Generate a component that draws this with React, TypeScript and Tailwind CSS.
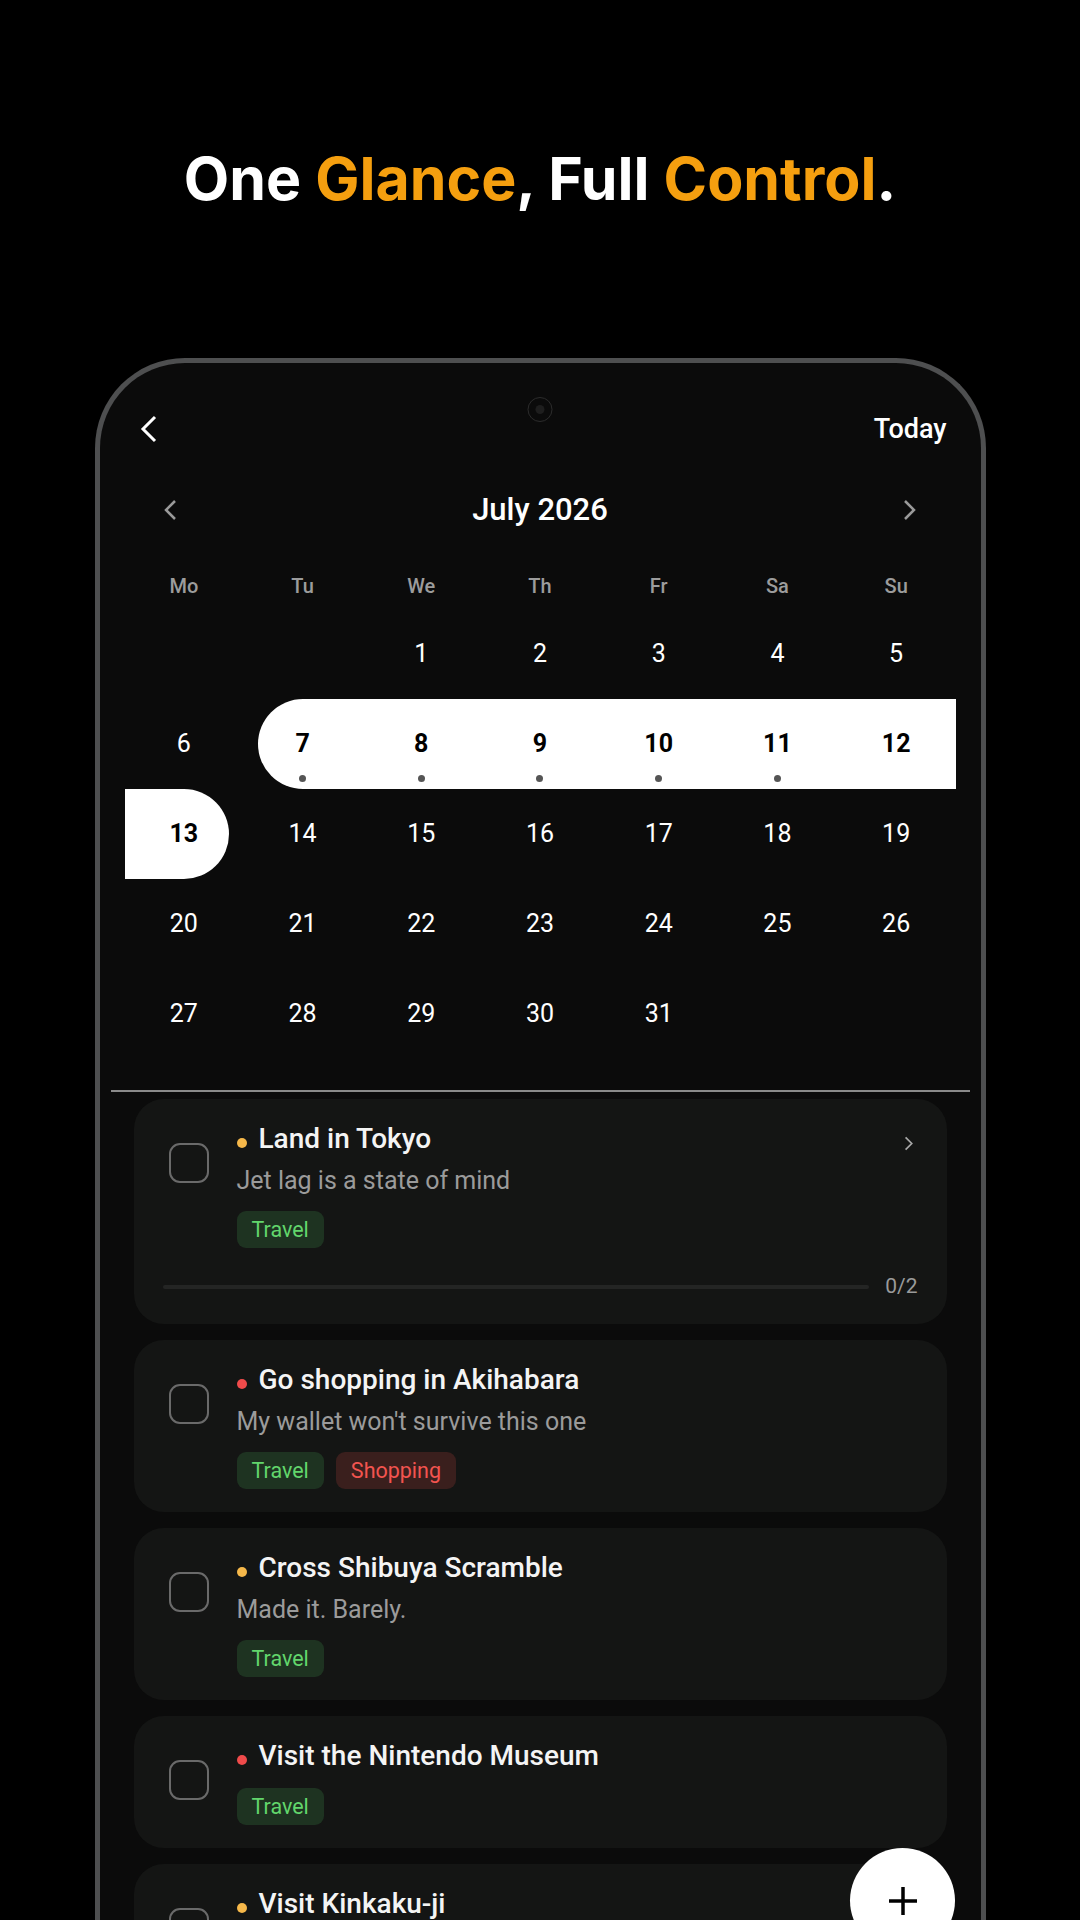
import React from 'react';

type Tag = { label: string; tone: 'green' | 'red' };

type Task = {
  title: string;
  note?: string;
  priority: 'yellow' | 'red';
  tags: Tag[];
  progress?: string;
  chevron?: boolean;
};

const weekDays = ['Mo', 'Tu', 'We', 'Th', 'Fr', 'Sa', 'Su'];

const weeks: (number | null)[][] = [
  [null, null, 1, 2, 3, 4, 5],
  [6, 7, 8, 9, 10, 11, 12],
  [13, 14, 15, 16, 17, 18, 19],
  [20, 21, 22, 23, 24, 25, 26],
  [27, 28, 29, 30, 31, null, null],
];

const tasks: Task[] = [
  {
    title: 'Land in Tokyo',
    note: 'Jet lag is a state of mind',
    priority: 'yellow',
    tags: [{ label: 'Travel', tone: 'green' }],
    progress: '0/2',
    chevron: true,
  },
  {
    title: 'Go shopping in Akihabara',
    note: "My wallet won't survive this one",
    priority: 'red',
    tags: [
      { label: 'Travel', tone: 'green' },
      { label: 'Shopping', tone: 'red' },
    ],
  },
  {
    title: 'Cross Shibuya Scramble',
    note: 'Made it. Barely.',
    priority: 'yellow',
    tags: [{ label: 'Travel', tone: 'green' }],
  },
  {
    title: 'Visit the Nintendo Museum',
    priority: 'red',
    tags: [{ label: 'Travel', tone: 'green' }],
  },
  {
    title: 'Visit Kinkaku-ji',
    note: 'Gold everywhere',
    priority: 'yellow',
    tags: [{ label: 'Travel', tone: 'green' }],
  },
];

function Chevron({ dir, className }: { dir: 'left' | 'right'; className?: string }) {
  return (
    <svg viewBox="0 0 14 22" className={className} fill="none" stroke="currentColor" strokeWidth="2.5">
      {dir === 'left' ? <polyline points="12,2 3,11 12,20" /> : <polyline points="2,2 11,11 2,20" />}
    </svg>
  );
}

function DayCell({ day }: { day: number | null }) {
  const inBand = day !== null && day >= 7 && day <= 12;
  const isEnd = day === 13;
  const hasDot = day !== null && day >= 7 && day <= 11;

  return (
    <div className="relative flex h-[90px] items-center justify-center">
      {/* selected week highlight */}
      {inBand && (
        <div
          className={`absolute inset-y-0 right-0 bg-white ${
            day === 7 ? 'left-[15px] rounded-l-full' : 'left-0'
          }`}
        />
      )}
      {isEnd && <div className="absolute inset-y-0 left-0 right-[14px] rounded-r-full bg-white" />}
      {day !== null && (
        <span
          className={`relative text-[25px] ${
            inBand || isEnd ? 'font-bold text-black' : 'text-white'
          }`}
        >
          {day}
        </span>
      )}
      {hasDot && <div className="absolute bottom-[7px] h-[7px] w-[7px] rounded-full bg-[#555555]" />}
    </div>
  );
}

function TaskCard({ task }: { task: Task }) {
  return (
    <div className={`flex flex-col rounded-[30px] bg-[#141514] px-[29px] pt-[22px] ${task.progress ? 'pb-[25px]' : 'pb-[23px]'}`}>
      <div className="flex items-start">
        <div className="ml-[6px] mt-[22px] h-[40px] w-[40px] shrink-0 rounded-[11px] border-[2.5px] border-[#6a6a6a]" />
        <div className="ml-[28px] flex-1">
          <div className="flex items-center">
            <div
              className={`mt-[8px] h-[10px] w-[10px] rounded-full ${
                task.priority === 'yellow' ? 'bg-[#f6b84a]' : 'bg-[#f04b4b]'
              }`}
            />
            <span className="ml-[12px] text-[28px] font-medium leading-[36px] text-[#f4f4f4]">{task.title}</span>
            {task.chevron && <Chevron dir="right" className="ml-auto mr-[4px] mt-[8px] h-[15px] w-[10px] text-[#a8a8a8]" />}
          </div>
          {task.note && <p className="mt-[8px] text-[25px] leading-[32px] text-[#9b9b9b]">{task.note}</p>}
          <div className="mt-[14px] flex gap-[12px]">
            {task.tags.map(tag => (
              <span
                key={tag.label}
                className={`h-[37px] rounded-[9px] px-[15px] text-[21.5px] leading-[37px] ${
                  tag.tone === 'green' ? 'bg-[#1e3321] text-[#62d66c]' : 'bg-[#3a1f1d] text-[#f2544f]'
                }`}
              >
                {tag.label}
              </span>
            ))}
          </div>
        </div>
      </div>
      {task.progress && (
        <div className="mt-[27px] flex h-[24px] items-center gap-[16px]">
          <div className="h-[4px] flex-1 rounded-full bg-[#242524]" />
          <span className="text-[21px] text-[#9a9a9a]">{task.progress}</span>
        </div>
      )}
    </div>
  );
}

export default function App() {
  return (
    <div className="relative h-[1920px] w-[1080px] overflow-hidden bg-black font-['Roboto',sans-serif]">
      <h1 className="pt-[140px] text-center font-['Inter',sans-serif] text-[59px] font-bold leading-[78px] text-white">
        One <span className="text-[#f59f0f]">Glance</span>, Full <span className="text-[#f59f0f]">Control</span>.
      </h1>

      {/* phone */}
      <div className="relative mx-auto mt-[140px] h-[1600px] w-[891px] rounded-t-[90px] border-[5px] border-b-0 border-[#4e4f50] bg-[#0b0b0b]">
        {/* camera hole */}
        <div className="absolute left-1/2 top-[34px] flex h-[25px] w-[25px] -translate-x-1/2 items-center justify-center rounded-full border border-[#2c2c2c]">
          <div className="h-[9px] w-[9px] rounded-full bg-[#1e1e1e]" />
        </div>

        <div className="mt-[46px] flex h-[40px] items-center justify-between pl-[40px] pr-[34px]">
          <svg viewBox="0 0 18 28" className="h-[28px] w-[18px] text-white" fill="none" stroke="currentColor" strokeWidth="3">
            <polyline points="15,2 3,14 15,26" />
          </svg>
          <span className="text-[27px] font-medium text-white">Today</span>
        </div>

        <div className="px-[25px]">
          <div className="mt-[41px] flex h-[40px] items-center justify-between px-[38px]">
            <Chevron dir="left" className="h-[22px] w-[14px] text-[#9a9a9a]" />
            <span className="text-[31px] font-medium text-white">July 2026</span>
            <Chevron dir="right" className="h-[22px] w-[14px] text-[#9a9a9a]" />
          </div>

          <div className="mt-[36px] grid h-[40px] grid-cols-7 items-center">
            {weekDays.map(d => (
              <span key={d} className="text-center text-[20px] font-medium text-[#9c9c9c]">
                {d}
              </span>
            ))}
          </div>

          <div className="mt-[3px]">
            {weeks.map((week, i) => (
              <div key={i} className="grid grid-cols-7">
                {week.map((day, j) => (
                  <DayCell key={j} day={day} />
                ))}
              </div>
            ))}
          </div>
        </div>

        <div className="mx-[11px] mt-[31px] h-[2px] bg-[#8a8a8a]" />

        <div className="mt-[7px] flex flex-col gap-[16px] px-[34px]">
          {tasks.map(task => (
            <TaskCard key={task.title} task={task} />
          ))}
        </div>
      </div>

      {/* floating add button */}
      <button className="absolute left-[850px] top-[1848px] flex h-[105px] w-[105px] items-center justify-center rounded-full bg-white">
        <svg viewBox="0 0 30 30" className="h-[30px] w-[30px] text-black" fill="none" stroke="currentColor" strokeWidth="3.5">
          <line x1="15" y1="1" x2="15" y2="29" />
          <line x1="1" y1="15" x2="29" y2="15" />
        </svg>
      </button>
    </div>
  );
}
